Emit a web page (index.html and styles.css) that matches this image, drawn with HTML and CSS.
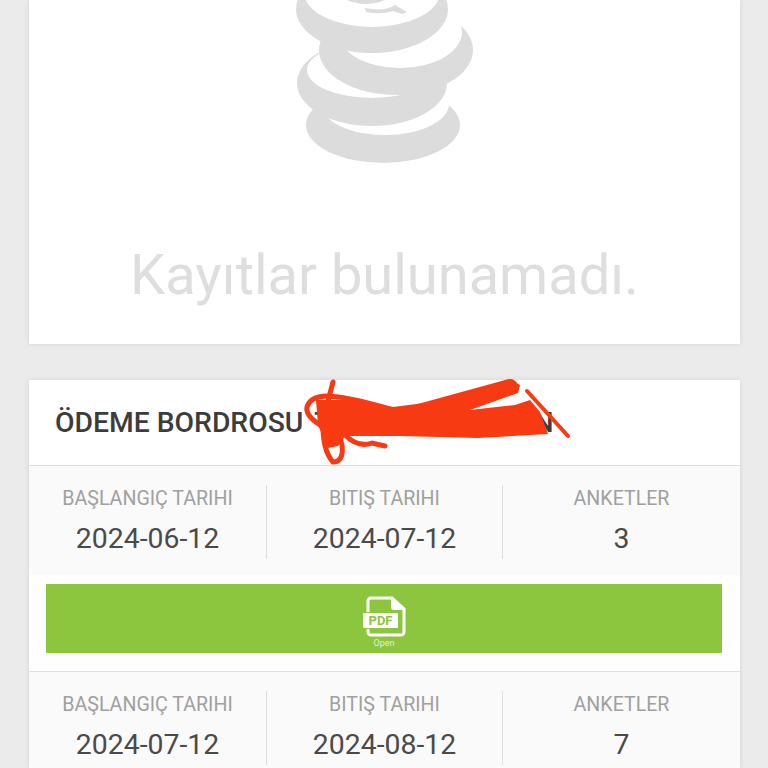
FILE: index.html
```html
<!DOCTYPE html>
<html lang="tr">
<head>
    <meta charset="UTF-8">
    <meta name="viewport" content="width=device-width, initial-scale=1.0">
    <title>Ödeme Bordrosu</title>
    <link rel="stylesheet" href="styles.css">
</head>
<body>

    <section class="card empty-card">
        <svg class="coins" viewBox="280 0 210 180" width="210" height="180" aria-hidden="true">
            <!-- coin stack, bottom coin first -->
            <ellipse cx="383" cy="125" rx="77" ry="38" fill="#dcdcdc"/>
            <ellipse cx="385" cy="104" rx="64" ry="31" fill="#fff"/>
            <ellipse cx="372" cy="83" rx="75" ry="43" fill="#dcdcdc"/>
            <ellipse cx="372" cy="70" rx="65" ry="28" fill="#fff"/>
            <ellipse cx="396" cy="50" rx="77" ry="45" fill="#dcdcdc"/>
            <ellipse cx="400" cy="32" rx="62" ry="36" fill="#fff"/>
            <ellipse cx="372" cy="9" rx="76" ry="44" fill="#dcdcdc"/>
            <ellipse cx="372" cy="-8" rx="68" ry="35" fill="#fff"/>
            <path d="M347 0Q366 8 385 0ZM365 8Q385 12 395 5L407 12L402 14L393 11Q380 15 366 12Z" fill="#dcdcdc"/>
        </svg>
        <p class="empty-text">Kayıtlar bulunamadı.</p>
    </section>

    <section class="card payroll-card">
        <h2 class="payroll-title">
            <span>ÖDEME BORDROSU</span>
            <span class="title-t">T</span>
            <span class="title-n">N</span>
        </h2>
        <svg class="scribble" viewBox="290 370 290 100" width="290" height="100" aria-hidden="true">
            <path d="M316 400L350 400L393 407L440 401L510 379L520 385L518 393L470 410L515 405L530 400L540 412L548 434L478 438L400 436L345 436L338 446L328 448L318 425Z" fill="#f83a12"/>
            <path d="M333 382L323 420Q322 450 333 462Q344 462 342 445L336 425M307 407Q310 397 325 396Q345 396 390 409M345 435Q358 448 372 443L385 446M320 425Q305 415 307 407" fill="none" stroke="#f83a12" stroke-width="5" stroke-linecap="round"/>
            <path d="M390 420L510 387" fill="none" stroke="#f83a12" stroke-width="16" stroke-linecap="round"/>
            <path d="M527 391L568 436" fill="none" stroke="#f83a12" stroke-width="4" stroke-linecap="round"/>
        </svg>

        <div class="period">
            <div class="stats">
                <div class="stat"><span class="stat-label">BAŞLANGIÇ TARIHI</span><span class="stat-value">2024-06-12</span></div>
                <div class="stat"><span class="stat-label">BITIŞ TARIHI</span><span class="stat-value">2024-07-12</span></div>
                <div class="stat"><span class="stat-label">ANKETLER</span><span class="stat-value">3</span></div>
            </div>
            <div class="period-action">
                <a class="pdf-btn" href="#">
                    <svg class="pdf-icon" viewBox="0 0 46 42" width="46" height="42" aria-hidden="true">
                        <path d="M7 16V5a3 3 0 0 1 3-3H31L43 13V36a3 3 0 0 1-3 3H10a3 3 0 0 1-3-3V33" fill="none" stroke="#fff" stroke-width="3"/>
                        <path d="M30 2V11a3 3 0 0 0 3 3H43Z" fill="#fff"/>
                        <rect x="2" y="17" width="35" height="15" rx="1" fill="#fff"/>
                        <text x="19.5" y="29" class="pdf-text">PDF</text>
                    </svg>
                    <span class="pdf-open">Open</span>
                </a>
            </div>
        </div>

        <div class="period">
            <div class="stats">
                <div class="stat"><span class="stat-label">BAŞLANGIÇ TARIHI</span><span class="stat-value">2024-07-12</span></div>
                <div class="stat"><span class="stat-label">BITIŞ TARIHI</span><span class="stat-value">2024-08-12</span></div>
                <div class="stat"><span class="stat-label">ANKETLER</span><span class="stat-value">7</span></div>
            </div>
        </div>
    </section>

</body>
</html>
```

FILE: styles.css
```css
html, body {
    height: 768px;
    overflow: hidden;
}
body {
    margin: 0;
    padding: 0 28px 0 29px;
    background-color: #ebebeb;
    font-family: Roboto, "Liberation Sans", sans-serif;
}
.card {
    position: relative;
    background-color: #fff;
    box-shadow: 0 0 5px rgba(0, 0, 0, 0.1);
}
.empty-card {
    display: flex;
    flex-direction: column;
    align-items: center;
    height: 344px;
    margin-bottom: 36px;
}
.coins {
    display: block;
}
.empty-text {
    margin: 60px 0 0;
    font-size: 56px;
    font-weight: 400;
    line-height: 70px;
    color: #dedede;
}
.payroll-card {
    height: 388px;
}
.payroll-title {
    display: flex;
    align-items: center;
    height: 85px;
    margin: 0;
    padding-left: 26px;
    font-size: 28.3px;
    font-weight: 500;
    color: #3c3c3c;
}
.title-t {
    margin-left: 11px;
}
.title-n {
    margin-left: 202px;
}
.scribble {
    position: absolute;
    left: 261px;
    top: -10px;
}
.period {
    border-top: 1px solid #dedede;
}
.stats {
    display: grid;
    grid-template-columns: 237px 236px 238px;
    box-sizing: border-box;
    height: 109px;
    padding-top: 19px;
    background-color: #fafafa;
}
.stat {
    display: flex;
    flex-direction: column;
    align-items: center;
    height: 74px;
    border-left: 1px solid #dedede;
}
.stat:first-child {
    border-left: none;
}
.stat-label {
    margin-top: 2px;
    font-size: 19.6px;
    line-height: 24px;
    color: #a0a0a0;
}
.stat-value {
    margin-top: 10px;
    font-size: 28.4px;
    line-height: 36px;
    color: #4a4a4a;
}
.period-action {
    padding: 9px 18px 18px 17px;
    background-color: #fefefe;
}
.pdf-btn {
    display: flex;
    flex-direction: column;
    align-items: center;
    height: 69px;
    padding-top: 12px;
    box-sizing: border-box;
    background-color: #8cc63f;
    text-decoration: none;
}
.pdf-icon {
    display: block;
}
.pdf-text {
    font-size: 13px;
    font-weight: 700;
    text-anchor: middle;
    fill: #8cc63f;
}
.pdf-open {
    font-size: 9px;
    line-height: 10px;
    color: #e4f2d0;
}
```
